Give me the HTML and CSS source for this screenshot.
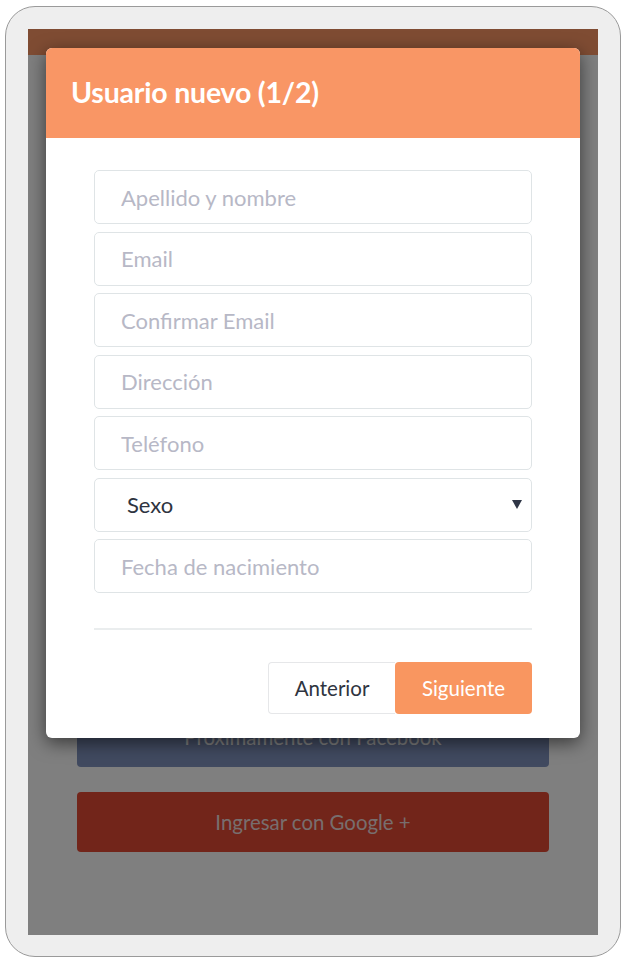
FILE: index.html
```html
<!DOCTYPE html>
<html>
<head>
  <meta charset="utf-8">
  <title>Usuario nuevo</title>
  <link rel="stylesheet" href="styles.css">
</head>
<body>
  <div class="device">
    <div class="screen">
      <div class="topbar"></div>
      <div class="content">
        <button class="social facebook">Proximamente con Facebook</button>
        <button class="social google">Ingresar con Google +</button>
      </div>

      <div class="overlay"></div>

      <div class="modal">
        <div class="modal-header">
          <h2>Usuario nuevo (1/2)</h2>
        </div>
        <div class="modal-body">
          <input type="text" class="field" placeholder="Apellido y nombre">
          <input type="email" class="field" placeholder="Email">
          <input type="email" class="field" placeholder="Confirmar Email">
          <input type="text" class="field" placeholder="Dirección">
          <input type="text" class="field" placeholder="Teléfono">
          <div class="select-wrap">
            <select class="field select">
              <option>Sexo</option>
              <option>Masculino</option>
              <option>Femenino</option>
            </select>
          </div>
          <input type="text" class="field" placeholder="Fecha de nacimiento">
          <hr class="divider">
          <div class="actions">
            <button class="btn btn-default">Anterior</button>
            <button class="btn btn-primary">Siguiente</button>
          </div>
        </div>
      </div>
    </div>
  </div>
</body>
</html>
```

FILE: styles.css
```css
body {
  margin: 0;
  background-color: #ffffff;
  font-family: Lato, "Open Sans", sans-serif;
}

.device {
  box-sizing: border-box;
  width: 616px;
  height: 951px;
  margin: 6px 0 0 5px;
  padding: 22px 0 0 22px;
  background-color: #eeeeee;
  border: 1px solid #9a9a9a;
  border-radius: 30px;
}

.screen {
  position: relative;
  width: 570px;
  height: 906px;
  background-color: #ffffff;
  overflow: hidden;
}

.topbar {
  height: 26px;
  background-color: #fe9866;
}

.content {
  display: flex;
  flex-direction: column;
  align-items: center;
  gap: 25px;
  padding-top: 652px;
}

.social {
  width: 472px;
  height: 60px;
  border: none;
  border-radius: 4px;
  color: #ffffff;
  font-family: Lato, sans-serif;
  font-size: 20.4px;
}

.facebook {
  background-color: #8294c0;
}

.google {
  background-color: #e44a34;
  color: #f0dcdc;
}

.overlay {
  position: absolute;
  top: 0;
  left: 0;
  right: 0;
  bottom: 0;
  background-color: rgba(0, 0, 0, 0.5);
}

.modal {
  position: absolute;
  top: 19px;
  left: 18px;
  width: 534px;
  height: 690px;
  background-color: #ffffff;
  border-radius: 6px;
  overflow: hidden;
  box-shadow: 0 5px 18px rgba(0, 0, 0, 0.55);
}

.modal-header {
  display: flex;
  align-items: center;
  height: 90px;
  padding: 0 25px;
  background-color: #f99665;
}

.modal-header h2 {
  margin: 0 0 2px 0;
  color: #ffffff;
  font-size: 28.5px;
  font-weight: 700;
  letter-spacing: -0.2px;
}

.modal-body {
  display: flex;
  flex-direction: column;
  gap: 7.5px;
  padding: 32px 48px 0 48px;
}

.field {
  box-sizing: border-box;
  width: 438px;
  height: 54px;
  padding: 0 26px;
  border: 1px solid #dfe4e6;
  border-radius: 5px;
  background-color: #ffffff;
  color: #333a46;
  font-family: Lato, sans-serif;
  font-size: 22px;
  outline: none;
}

.field::placeholder {
  color: #b7b8c6;
}

.select-wrap {
  position: relative;
}

.select {
  appearance: none;
  -webkit-appearance: none;
  padding-left: 32px;
  color: #2e3340;
}

.select-wrap::after {
  content: "";
  position: absolute;
  top: 22px;
  right: 10px;
  border-left: 5px solid transparent;
  border-right: 5px solid transparent;
  border-top: 9px solid #2f3646;
}

.divider {
  width: 100%;
  margin: 27.5px 0 0 0;
  border: none;
  border-top: 2px solid #eaedee;
}

.actions {
  display: flex;
  justify-content: flex-end;
  margin-top: 24px;
}

.btn {
  height: 52px;
  border-radius: 4px;
  font-family: Lato, sans-serif;
  font-size: 20.5px;
  cursor: pointer;
}

.btn-default {
  width: 127px;
  background-color: #ffffff;
  border: 1px solid #e6e7e9;
  border-right: none;
  border-radius: 4px 0 0 4px;
  color: #2f3440;
}

.btn-primary {
  width: 137px;
  background-color: #f99660;
  border: none;
  color: #ffffff;
}
```
